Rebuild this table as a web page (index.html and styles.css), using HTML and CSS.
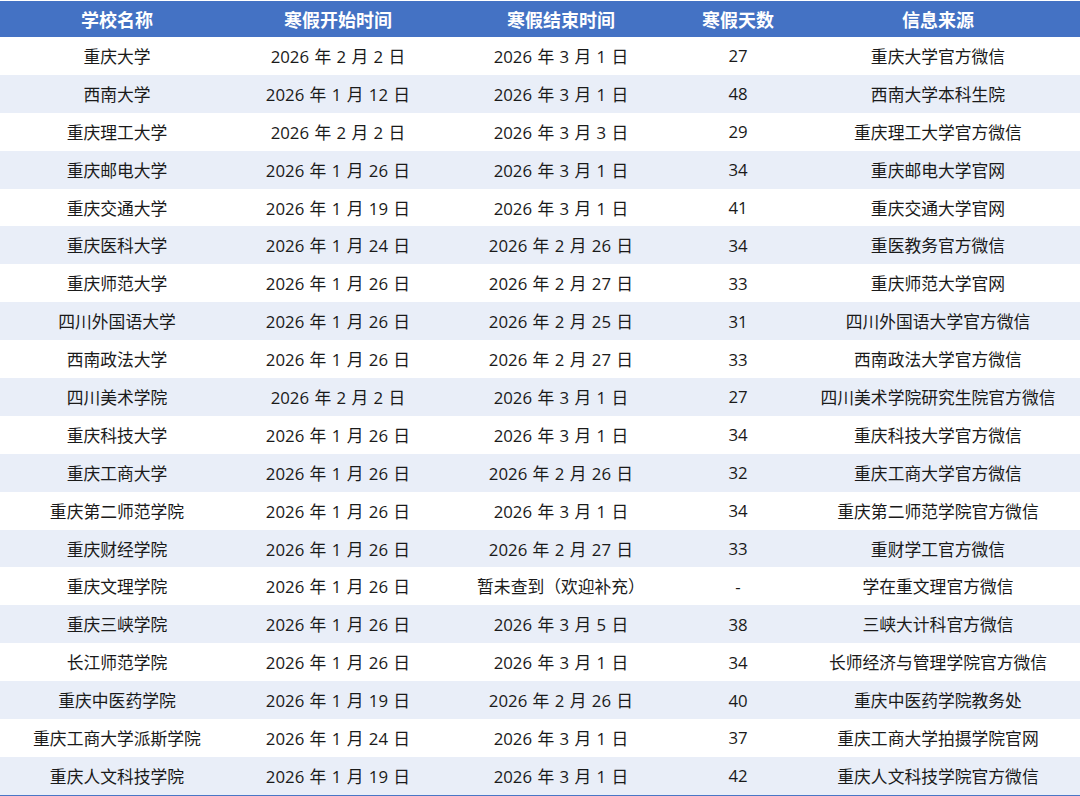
FILE: index.html
```html
<!DOCTYPE html>
<html lang="zh-CN">
<head>
<meta charset="utf-8">
<link rel="stylesheet" href="styles.css">
</head>
<body>
<table class="tbl">
<colgroup>
<col class="c1"><col class="c2"><col class="c3"><col class="c4"><col class="c5">
</colgroup>
<thead>
<tr><th>学校名称</th><th>寒假开始时间</th><th>寒假结束时间</th><th>寒假天数</th><th>信息来源</th></tr>
</thead>
<tbody>
<tr><td>重庆大学</td><td>2026 年 2 月 2 日</td><td>2026 年 3 月 1 日</td><td>27</td><td>重庆大学官方微信</td></tr>
<tr><td>西南大学</td><td>2026 年 1 月 12 日</td><td>2026 年 3 月 1 日</td><td>48</td><td>西南大学本科生院</td></tr>
<tr><td>重庆理工大学</td><td>2026 年 2 月 2 日</td><td>2026 年 3 月 3 日</td><td>29</td><td>重庆理工大学官方微信</td></tr>
<tr><td>重庆邮电大学</td><td>2026 年 1 月 26 日</td><td>2026 年 3 月 1 日</td><td>34</td><td>重庆邮电大学官网</td></tr>
<tr><td>重庆交通大学</td><td>2026 年 1 月 19 日</td><td>2026 年 3 月 1 日</td><td>41</td><td>重庆交通大学官网</td></tr>
<tr><td>重庆医科大学</td><td>2026 年 1 月 24 日</td><td>2026 年 2 月 26 日</td><td>34</td><td>重医教务官方微信</td></tr>
<tr><td>重庆师范大学</td><td>2026 年 1 月 26 日</td><td>2026 年 2 月 27 日</td><td>33</td><td>重庆师范大学官网</td></tr>
<tr><td>四川外国语大学</td><td>2026 年 1 月 26 日</td><td>2026 年 2 月 25 日</td><td>31</td><td>四川外国语大学官方微信</td></tr>
<tr><td>西南政法大学</td><td>2026 年 1 月 26 日</td><td>2026 年 2 月 27 日</td><td>33</td><td>西南政法大学官方微信</td></tr>
<tr><td>四川美术学院</td><td>2026 年 2 月 2 日</td><td>2026 年 3 月 1 日</td><td>27</td><td>四川美术学院研究生院官方微信</td></tr>
<tr><td>重庆科技大学</td><td>2026 年 1 月 26 日</td><td>2026 年 3 月 1 日</td><td>34</td><td>重庆科技大学官方微信</td></tr>
<tr><td>重庆工商大学</td><td>2026 年 1 月 26 日</td><td>2026 年 2 月 26 日</td><td>32</td><td>重庆工商大学官方微信</td></tr>
<tr><td>重庆第二师范学院</td><td>2026 年 1 月 26 日</td><td>2026 年 3 月 1 日</td><td>34</td><td>重庆第二师范学院官方微信</td></tr>
<tr><td>重庆财经学院</td><td>2026 年 1 月 26 日</td><td>2026 年 2 月 27 日</td><td>33</td><td>重财学工官方微信</td></tr>
<tr><td>重庆文理学院</td><td>2026 年 1 月 26 日</td><td>暂未查到（欢迎补充）</td><td>-</td><td>学在重文理官方微信</td></tr>
<tr><td>重庆三峡学院</td><td>2026 年 1 月 26 日</td><td>2026 年 3 月 5 日</td><td>38</td><td>三峡大计科官方微信</td></tr>
<tr><td>长江师范学院</td><td>2026 年 1 月 26 日</td><td>2026 年 3 月 1 日</td><td>34</td><td>长师经济与管理学院官方微信</td></tr>
<tr><td>重庆中医药学院</td><td>2026 年 1 月 19 日</td><td>2026 年 2 月 26 日</td><td>40</td><td>重庆中医药学院教务处</td></tr>
<tr><td>重庆工商大学派斯学院</td><td>2026 年 1 月 24 日</td><td>2026 年 3 月 1 日</td><td>37</td><td>重庆工商大学拍摄学院官网</td></tr>
<tr><td>重庆人文科技学院</td><td>2026 年 1 月 19 日</td><td>2026 年 3 月 1 日</td><td>42</td><td>重庆人文科技学院官方微信</td></tr>
</tbody>
</table>
</body>
</html>
```

FILE: styles.css
```css
html, body {
  margin: 0;
  padding: 0;
  background: #ffffff;
}
body {
  font-family: "Open Sans", "Noto Sans CJK SC", sans-serif;
  color: #1a1a1a;
}
.tbl {
  width: 1080px;
  border-collapse: collapse;
  table-layout: fixed;
  border-top: 1px solid #ffffff;
  border-bottom: 1px solid #4a76c6;
}
.c1 { width: 234px; }
.c2 { width: 208px; }
.c3 { width: 238px; }
.c4 { width: 116px; }
.c5 { width: 284px; }
.tbl th {
  background: #4472c4;
  color: #ffffff;
  font-family: "Noto Sans CJK SC", sans-serif;
  font-size: 18px;
  font-weight: 700;
  height: 36px;
  padding: 0;
  text-align: center;
  vertical-align: middle;
}
.tbl td {
  height: 37.9px;
  padding: 0;
  font-size: 16.8px;
  word-spacing: 1px;
  text-align: center;
  vertical-align: middle;
  white-space: nowrap;
}
.tbl tbody tr:nth-child(even) td {
  background: #e9eef8;
}
```
